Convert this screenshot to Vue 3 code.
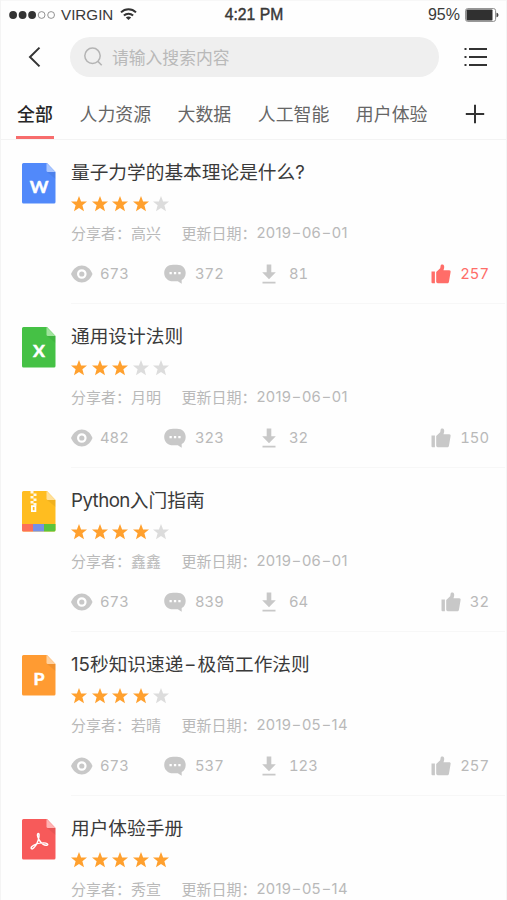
<script setup>
const tabs = ['全部', '人力资源', '大数据', '人工智能', '用户体验']

const docs = [
  { kind: 'word', letter: 'W', color: '#5189fa', fold: '#a9c6ff', title: '量子力学的基本理论是什么?', stars: 4, author: '高兴', date: '2019-06-01', views: 673, comments: 372, downloads: 81, likes: 257, liked: true },
  { kind: 'excel', letter: 'X', color: '#45c145', fold: '#a0e49d', title: '通用设计法则', stars: 3, author: '月明', date: '2019-06-01', views: 482, comments: 323, downloads: 32, likes: 150 },
  { kind: 'zip', letter: '', color: '#ffbd20', fold: '#ffe09a', title: 'Python入门指南', stars: 4, author: '鑫鑫', date: '2019-06-01', views: 673, comments: 839, downloads: 64, likes: 32 },
  { kind: 'ppt', letter: 'P', color: '#ff9b32', fold: '#ffd1a0', title: '15秒知识速递-极简工作法则', stars: 4, author: '若晴', date: '2019-05-14', views: 673, comments: 537, downloads: 123, likes: 257 },
  { kind: 'pdf', letter: '', color: '#f75a5a', fold: '#ffb3b3', title: '用户体验手册', stars: 5, author: '秀宣', date: '2019-05-14' },
]

// Splits a string so that Latin words and hyphens can be styled apart.
const parts = (text) => text.split(/(-|[A-Za-z]+)/).filter(Boolean)
const partClass = (p) => ({ dash: p === '-', latin: /^[A-Za-z]+$/.test(p) })
</script>

<template>
  <div class="screen">
    <header class="status">
      <div class="carrier">
        <svg class="signal" width="47" height="10" viewBox="0 0 47 10">
          <circle v-for="n in 5" :key="n" :cx="4.1 + (n - 1) * 9.5" cy="5" :r="n < 4 ? 3.9 : 3.4" :fill="n < 4 ? '#333' : 'none'" :stroke="n < 4 ? 'none' : '#777'" stroke-width=".8" />
        </svg>
        <span>VIRGIN</span>
        <svg class="wifi" width="17" height="13" viewBox="0 0 17 13" fill="none" stroke="#333" stroke-width="2">
          <path d="M1 4.4C5.2.3 11.8.3 16 4.4" />
          <path d="M3.9 7.5c2.6-2.5 6.6-2.5 9.2 0" />
          <path d="M8.5 12 5.8 9.5c1.6-1.4 3.8-1.4 5.4 0z" fill="#333" stroke="none" />
        </svg>
      </div>
      <div class="clock">4:21 PM</div>
      <div class="power">
        <span>95%</span>
        <svg width="34" height="14" viewBox="0 0 34 14">
          <rect x=".6" y=".6" width="30" height="12.8" rx="2" fill="#fff" stroke="#8c8c8c" stroke-width="1" />
          <rect x="1.5" y="1.5" width="26" height="11" rx=".8" fill="#303030" />
          <path d="M31.5 4.8c2.6.5 2.6 4 0 4.5z" fill="#444" />
        </svg>
      </div>
    </header>

    <div class="searchbar">
      <svg class="back" width="14" height="22" viewBox="0 0 14 22" fill="none" stroke="#333" stroke-width="2"><path d="M11.5 1.6 2 11l9.5 9.4" /></svg>
      <div class="field">
        <svg width="20" height="20" viewBox="0 0 20 20" fill="none" stroke="#b4b4b4" stroke-width="1.5">
          <circle cx="8.5" cy="8.8" r="7.7" /><path d="m13.900 14.4 3.800 3.800" />
        </svg>
        <span>请输入搜索内容</span>
      </div>
      <svg class="menu" width="24" height="20" viewBox="0 0 24 20" fill="none" stroke="#333" stroke-width="2.2">
        <path d="M.5 2h2M5 2H23M.5 10h2M5 10H23M.5 18h2M5 18H23" />
      </svg>
    </div>

    <nav class="tabs">
      <span v-for="(tab, i) in tabs" :key="tab" class="tab" :class="{ active: i === 0 }">{{ tab }}</span>
      <svg class="plus" width="20" height="20" viewBox="0 0 20 20" stroke="#333" stroke-width="2"><path d="M10 .8v18.400M.8 10h18.400" /></svg>
    </nav>

    <main>
      <article v-for="doc in docs" :key="doc.title" class="row">
        <svg class="file" width="34" height="41" viewBox="0 0 34 41">
          <path d="M1.5 0H25l8.5 9v30a1.5 1.5 0 0 1-1.5 1.5H1.5A1.5 1.5 0 0 1 0 39V1.5A1.5 1.5 0 0 1 1.5 0z" :fill="doc.color" />
          <path d="M25 9h8.5v7z" fill="#000" opacity=".06" />
          <path d="M24.5 0v7.5A1.5 1.5 0 0 0 26 9h7.5z" :fill="doc.fold" />
          <text v-if="doc.letter" class="letter" x="17" y="29.5" text-anchor="middle">{{ doc.letter }}</text>
          <template v-if="doc.kind === 'zip'">
            <path d="M0 33h11v7.5H1.5A1.5 1.5 0 0 1 0 39z" fill="#fc6f59" />
            <path d="M11 33h11v7.5H11z" fill="#7690e6" />
            <path d="M22 33h11.5v6a1.5 1.5 0 0 1-1.5 1.5H22z" fill="#5bc43c" />
            <path d="M8.5 0h3v2.500h-3zM11.500 2.500h3V5h-3zM8.500 5h3v2.500h-3zM11.500 7.500h3V10h-3zM8.500 10h3v2.500h-3zM11.500 12h3v2.500h-3z" fill="#fff" opacity=".9" />
            <path d="M9.900 15.200h3.500v5H9.900z" fill="none" stroke="#fff" stroke-width="1.800" />
          </template>
          <path v-if="doc.kind === 'pdf'" d="M16.500 14.500c-1.900 0-1 4 1 7 2.200 3.200 5.400 5.200 7.600 4.700 1.900-.6-.2-2.500-3.900-2.300-4.400.2-9.500 1.800-11.500 3.900-1.500 1.800.3 2.900 1.900 1.300 2.100-2.100 4.500-6.600 5.300-10.700.3-2.200.3-3.900-.4-3.900z" fill="none" stroke="#fff" stroke-width="1.400" />
        </svg>

        <div class="body">
          <h2><span v-for="(p, i) in parts(doc.title)" :key="i" :class="partClass(p)">{{ p }}</span></h2>
          <div class="stars">
            <svg v-for="n in 5" :key="n" width="16" height="16" viewBox="0 0 16 16">
              <path d="m8 0 2.100 5.400 5.900.2-4.600 3.700 1.600 5.900L8 12l-5 3.200 1.600-5.900L0 5.600l5.900-.2z" :fill="n <= doc.stars ? '#ffa02e' : '#dcdcdc'" />
            </svg>
          </div>
          <div class="meta">
            <span class="author">分享者：{{ doc.author }}</span>
            <span class="label">更新日期：</span><span class="date"><span v-for="(p, i) in parts(doc.date)" :key="i" :class="partClass(p)">{{ p }}</span></span>
          </div>
          <div v-if="doc.views" class="stats">
            <div class="stat views">
              <svg width="22" height="18" viewBox="0 0 22 18">
                <path d="M0 9C2.500 3.400 6.200.5 10.800.5S19.100 3.400 21.500 9C19.100 14.600 15.400 17.500 10.800 17.500S2.500 14.600 0 9z" fill="#c8c8c8" />
                <circle cx="10.800" cy="9" r="3.700" fill="none" stroke="#fff" stroke-width="2.200" />
              </svg>
              <span>{{ doc.views }}</span>
            </div>
            <div class="stat comments">
              <svg width="22" height="20" viewBox="0 0 22 20">
                <path d="M9 .8h4c5.200 0 8.700 3.500 8.700 8.100 0 3.300-1.500 5.800-4 7.100V19.800l-3.900-2.600H9C3.800 17.200.2 13.500.2 8.900S3.800.8 9 .8z" fill="#c8c8c8" />
                <path d="M5.500 7.900h2.300v2.300H5.500zM9.900 7.900h2.300v2.300H9.900zM14.300 7.900h2.300v2.300h-2.300z" fill="#fff" />
              </svg>
              <span>{{ doc.comments }}</span>
            </div>
            <div class="stat downloads">
              <svg width="14" height="20" viewBox="0 0 14 20" fill="#c8c8c8">
                <path d="M4.700.6h4.600v7.600h4.500L7 15.300.2 8.200h4.500zM.5 17.800h13v1.800H.5z" />
              </svg>
              <span>{{ doc.downloads }}</span>
            </div>
            <div class="stat likes" :class="{ liked: doc.liked }">
              <svg width="20" height="20" viewBox="0 0 20 20" fill="currentColor">
                <path d="M.5 7.500h3.400v11.800H1.500a1 1 0 0 1-1-1zM5.200 8l4-3.800L9.700 1.500C10 .2 12.600.1 13.100 2.100c.3 1.500-.1 2.800-.6 4.100h5.700c1.200 0 1.600.9 1.400 1.900l-1.600 9.300c-.2 1.300-.8 1.900-1.900 1.900H6.600L5.200 18.200z" />
              </svg>
              <span>{{ doc.likes }}</span>
            </div>
          </div>
        </div>
      </article>
    </main>
  </div>
</template>

<style>
body { margin: 0; background: #fff; overflow: hidden; }
</style>

<style scoped>
.screen {
  box-sizing: border-box;
  width: 507px;
  height: 900px;
  overflow: hidden;
  background: #fefefe;
  border-left: 1px solid #f4f4f4;
  border-right: 1px solid #f4f4f4;
  font-family: Inter, "Noto Sans CJK SC", sans-serif;
  color: #3a3a3a;
}
svg { display: block; flex: none; }
.status {
  display: grid;
  grid-template-columns: 1fr auto 1fr;
  align-items: center;
  height: 28px;
  box-sizing: border-box;
  padding: 0 7px 0 8px;
  border-top: 1px solid #f7f7f7;
  font: 16px/27px "Liberation Sans", Arial, sans-serif;
}
.carrier, .power { display: flex; align-items: center; }
.carrier span { margin-left: 5px; font-size: 15.2px; }
.wifi { margin-left: 7px; }
.clock { font-size: 15.700px; -webkit-text-stroke: .4px #333; }
.power { justify-content: flex-end; gap: 5px; }
.searchbar {
  display: flex;
  align-items: center;
  height: 57px;
  padding-left: 27px;
}
.field {
  display: flex;
  align-items: center;
  box-sizing: border-box;
  width: 369px;
  height: 40px;
  margin-left: 28px;
  padding-left: 14px;
  border-radius: 20px;
  background: #efefef;
  color: #b9b9b9;
  font-size: 16.8px;
}
.field span { margin-left: 8px; }
.menu { margin-left: 25px; }
.tabs {
  display: flex;
  align-items: center;
  box-sizing: border-box;
  height: 55px;
  padding-left: 15px;
  border-bottom: 1px solid #f3f3f3;
  font-size: 17.9px;
  color: #666;
}
.tab {
  box-sizing: border-box;
  height: 54px;
  line-height: 60px;
  margin-right: 26.5px;
  white-space: nowrap;
}
.tab.active {
  width: 38px;
  margin-right: 25.5px;
  text-align: center;
  font-weight: 500;
  color: #262626;
  border-bottom: 3px solid #f76c6c;
}
.plus { margin: 3px 0 0 11px; }
.row {
  display: flex;
  align-items: flex-start;
  height: 164.1px;
  padding-left: 21px;
}
.file { margin-top: 23px; }
.letter {
  font: 700 17.8px Lato, sans-serif;
  fill: #fff;
  stroke: #fff;
  stroke-width: .5px;
}
.body {
  box-sizing: border-box;
  width: 434px;
  height: 164.1px;
  margin-left: 15px;
  padding-top: 19px;
  border-bottom: 1px solid #f7f7f7;
}
h2 {
  height: 28px;
  margin: 0;
  font-size: 18.7px;
  line-height: 28px;
  font-weight: 400;
  white-space: nowrap;
}
h2 .latin { letter-spacing: -.55px; }
h2 .dash { margin: 0 2.8px; }
.dash {
  display: inline-block;
  transform: scaleX(1.45);
  margin: 0 1.8px;
}
.stars { display: flex; gap: 4.6px; margin-top: 9px; }
.meta {
  display: flex;
  height: 21px;
  margin-top: 10.5px;
  font-size: 15px;
  line-height: 21px;
  color: #b9b9b9;
}
.author { width: 110.5px; }
.label { width: 75px; }
.date { font-size: 14.8px; letter-spacing: .3px; white-space: nowrap; }
.stats {
  display: grid;
  grid-template-columns: 93px 98px 1fr auto;
  align-items: center;
  height: 22px;
  margin-top: 19px;
  padding-right: 16px;
  font-size: 14.8px;
  font-variant-numeric: tabular-nums;
  color: #b9b9b9;
}
.stat { display: flex; align-items: center; }
.views span { margin-left: 7px; }
.comments span { margin-left: 9px; }
.downloads span { margin-left: 13px; }
.likes svg { color: #c8c8c8; }
.likes span { margin-left: 9px; }
.liked, .liked svg { color: #ff6d68; }
</style>
